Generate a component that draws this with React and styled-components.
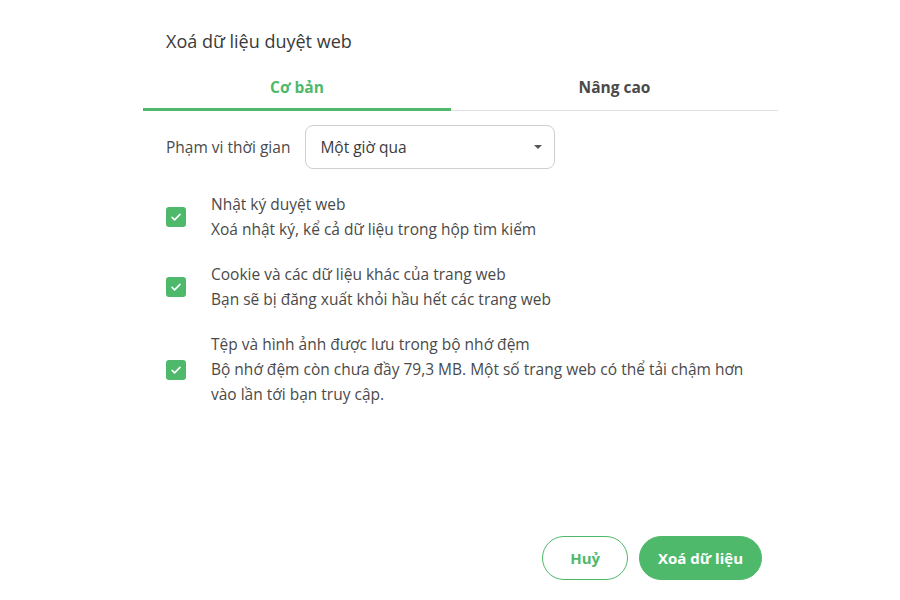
import React from "react";
import styled, { createGlobalStyle } from "styled-components";

const GREEN = "#4fb96b";

const items = [
  {
    title: "Nhật ký duyệt web",
    desc: "Xoá nhật ký, kể cả dữ liệu trong hộp tìm kiếm",
  },
  {
    title: "Cookie và các dữ liệu khác của trang web",
    desc: "Bạn sẽ bị đăng xuất khỏi hầu hết các trang web",
  },
  {
    title: "Tệp và hình ảnh được lưu trong bộ nhớ đệm",
    desc: "Bộ nhớ đệm còn chưa đầy 79,3 MB. Một số trang web có thể tải chậm hơn vào lần tới bạn truy cập.",
  },
];

export default function App() {
  return (
    <>
      <Global />
      <Page>
        <Dialog>
          <Title>Xoá dữ liệu duyệt web</Title>
          <Tabs>
            <Tab $active>Cơ bản</Tab>
            <Tab>Nâng cao</Tab>
          </Tabs>
          <Body>
            <RangeRow>
              <RangeLabel>Phạm vi thời gian</RangeLabel>
              <Select>
                <span>Một giờ qua</span>
                <Caret />
              </Select>
            </RangeRow>
            <List>
              {items.map((it) => (
                <Item key={it.title}>
                  <Box>
                    <svg width="14" height="14" viewBox="0 0 14 14">
                      <path d="M3 7.3l2.6 2.6L11 4.4" fill="none" stroke="#fff" strokeWidth="1.6" strokeLinecap="round" strokeLinejoin="round" />
                    </svg>
                  </Box>
                  <ItemText>
                    <div>{it.title}</div>
                    <div>{it.desc}</div>
                  </ItemText>
                </Item>
              ))}
            </List>
          </Body>
          <Footer>
            <Button>Huỷ</Button>
            <Button $primary>Xoá dữ liệu</Button>
          </Footer>
        </Dialog>
      </Page>
    </>
  );
}

const Global = createGlobalStyle`
  html, body {
    margin: 0;
    background: #fff;
    font-family: "Open Sans", "Noto Sans", sans-serif;
  }
`;

const Page = styled.div`
  height: 600px;
  padding-left: 143px;
`;

const Dialog = styled.div`
  width: 635px;
  height: 600px;
  display: flex;
  flex-direction: column;
`;

const Title = styled.div`
  padding: 29px 23px 0;
  font-size: 18px;
  line-height: 24px;
  color: #3a3a3a;
`;

const Tabs = styled.div`
  margin-top: 12px;
  display: flex;
  border-bottom: 1px solid #e2e2e2;
`;

const Tab = styled.div`
  flex: ${(p) => (p.$active ? "0 0 308px" : "1")};
  height: 43px;
  display: flex;
  align-items: center;
  justify-content: center;
  font-size: 15.5px;
  font-weight: 700;
  color: ${(p) => (p.$active ? GREEN : "#4a4a4a")};
  border-bottom: 3px solid ${(p) => (p.$active ? GREEN : "transparent")};
  margin-bottom: -1px;
`;

const Body = styled.div`
  padding: 0 23px;
`;

const RangeRow = styled.div`
  margin-top: 14px;
  display: flex;
  align-items: center;
  gap: 15px;
`;

const RangeLabel = styled.div`
  font-size: 15.5px;
  color: #4a4a4a;
`;

const Select = styled.div`
  width: 250px;
  height: 44px;
  box-sizing: border-box;
  border: 1px solid #cfcfcf;
  border-radius: 8px;
  display: flex;
  align-items: center;
  justify-content: space-between;
  padding: 0 12px 0 14px;
  font-size: 15.5px;
  color: #3a3a3a;
`;

const Caret = styled.span`
  width: 0;
  height: 0;
  border-left: 4px solid transparent;
  border-right: 4px solid transparent;
  border-top: 4px solid #555;
`;

const List = styled.div`
  margin-top: 23px;
  display: flex;
  flex-direction: column;
  gap: 20px;
`;

const Item = styled.div`
  display: flex;
  align-items: center;
  gap: 25px;
`;

const Box = styled.div`
  flex: none;
  width: 20px;
  height: 20px;
  border-radius: 3px;
  background: ${GREEN};
  display: flex;
  align-items: center;
  justify-content: center;
`;

const ItemText = styled.div`
  font-size: 15.5px;
  line-height: 25px;
  color: #4a4a4a;
  max-width: 545px;
`;

const Footer = styled.div`
  margin-top: auto;
  display: flex;
  justify-content: flex-end;
  gap: 11px;
  padding: 0 16px 20px 0;
`;

const Button = styled.button`
  height: 44px;
  padding: 0 ${(p) => (p.$primary ? "18px" : "27px")};
  border-radius: 22px;
  border: 1px solid ${GREEN};
  background: ${(p) => (p.$primary ? GREEN : "#fff")};
  color: ${(p) => (p.$primary ? "#fff" : GREEN)};
  font-family: inherit;
  font-size: 15px;
  font-weight: 700;
  cursor: pointer;
`;
